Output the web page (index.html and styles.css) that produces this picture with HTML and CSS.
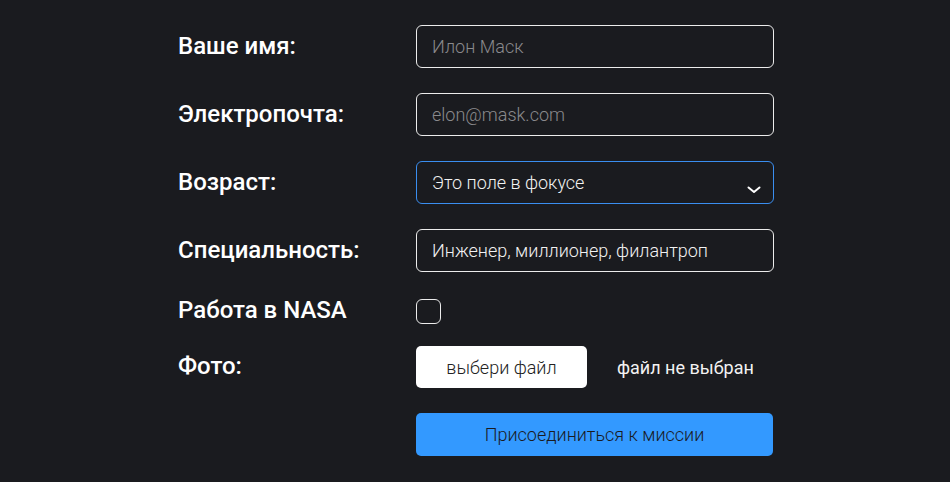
FILE: index.html
```html
<!DOCTYPE html>
<html lang="ru">
<head>
<meta charset="utf-8">
<title>Форма</title>
<link rel="stylesheet" href="styles.css">
</head>
<body>
<form class="form">
  <div class="row">
    <label class="label">Ваше имя:</label>
    <div class="field"><span class="placeholder">Илон Маск</span></div>
  </div>
  <div class="row">
    <label class="label">Электропочта:</label>
    <div class="field"><span class="placeholder">elon@mask.com</span></div>
  </div>
  <div class="row">
    <label class="label">Возраст:</label>
    <div class="field field-focus"><span class="value">Это поле в фокусе</span>
      <svg class="chevron" width="14" height="8" viewBox="0 0 14 8"><path d="M1.5 1.5 L7 6 L12.5 1.5" fill="none" stroke="#fff" stroke-width="2" stroke-linecap="round" stroke-linejoin="round"/></svg>
    </div>
  </div>
  <div class="row">
    <label class="label">Специальность:</label>
    <div class="field"><span class="value">Инженер, миллионер, филантроп</span></div>
  </div>
  <div class="row row-check">
    <label class="label">Работа в NASA</label>
    <div class="checkbox"></div>
  </div>
  <div class="row row-file">
    <label class="label">Фото:</label>
    <div class="file">
      <div class="file-btn">выбери файл</div>
      <span class="file-name">файл не выбран</span>
    </div>
  </div>
  <div class="row row-submit">
    <span class="label"></span>
    <div class="submit">Присоединиться к миссии</div>
  </div>
</form>
</body>
</html>
```

FILE: styles.css
```css
* { box-sizing: border-box; }
html, body {
  margin: 0;
  height: 100%;
  background: #1a1b1f;
}
body {
  font-family: Roboto, "Noto Sans", sans-serif;
  color: #fff;
  overflow: hidden;
}
.form {
  display: flex;
  flex-direction: column;
  gap: 25px;
  padding: 25px 0 0 178px;
}
.row {
  display: flex;
  align-items: center;
  height: 43px;
}
.label {
  width: 238px;
  flex: none;
  font-size: 24px;
  font-weight: 500;
  color: #fff;
  position: relative;
  top: -1px;
}
.field {
  width: 358px;
  height: 43px;
  border: 1px solid #ececec;
  border-radius: 6px;
  display: flex;
  align-items: center;
  padding: 0 15px;
  font-size: 18px;
  font-weight: 300;
  position: relative;
}
.placeholder { color: #8a8a8d; }
.value { color: #f2f2f2; }
.field-focus {
  border-color: #3a8ef0;
}
.chevron {
  position: absolute;
  right: 12px;
  bottom: 9px;
}
.row-check {
  height: 24px;
  margin-top: 2px;
}
.checkbox {
  width: 25px;
  height: 25px;
  border: 1.5px solid #ececec;
  border-radius: 6px;
}
.row-file {
  height: 42px;
  margin-top: -2px;
}
.file {
  display: flex;
  align-items: center;
}
.file-btn {
  width: 171px;
  height: 42px;
  background: #fff;
  border-radius: 5px;
  color: #222;
  font-size: 18px;
  font-weight: 300;
  display: flex;
  align-items: center;
  justify-content: center;
}
.file-name {
  margin-left: 30px;
  font-size: 18px;
  font-weight: 400;
  color: #f2f2f2;
}
.submit {
  width: 357px;
  height: 43px;
  background: #3399ff;
  border-radius: 5px;
  color: #1a1b1f;
  font-size: 18px;
  font-weight: 300;
  display: flex;
  align-items: center;
  justify-content: center;
}
```
